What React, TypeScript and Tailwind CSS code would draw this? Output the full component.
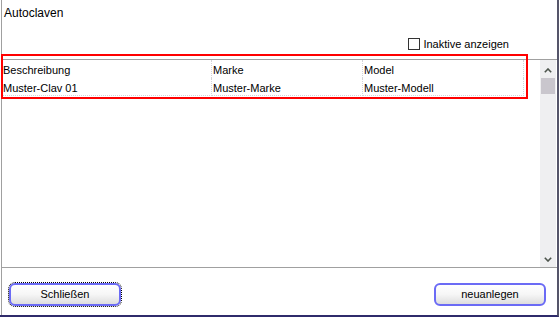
import React from "react";

function Chevron({ up }: { up?: boolean }) {
  return (
    <svg width="8" height="5" viewBox="0 0 8 5">
      <path
        d={up ? "M0.8 4.2 L4 1 L7.2 4.2" : "M0.8 0.8 L4 4 L7.2 0.8"}
        fill="none"
        stroke="#4d554d"
        strokeWidth="1.6"
      />
    </svg>
  );
}

export default function App() {
  const cell =
    "h-[18px] pt-[2px] pl-[1px] leading-[17px] box-border overflow-hidden whitespace-nowrap border-r border-dotted border-r-[#d4d4d8]";
  return (
    <div className="relative w-[559px] h-[317px] overflow-hidden bg-white pl-[1px] border-r-2 border-r-[#55556a] border-b-2 border-b-[#2f2b6b] font-['Liberation_Sans',Arial,sans-serif] text-[11px] text-black">
      <div className="flex h-full flex-col border-l border-l-[#a0a0a0]">
        <div className="pl-[2px] pt-[6px] text-[12px] leading-[15px]">Autoclaven</div>

        <div className="mt-[16px] flex h-[14px] items-center justify-end pr-[48px]">
          <div className="h-[12px] w-[12px] border border-[#333333] bg-white" />
          <span className="ml-[3px] leading-[14px]">Inaktive anzeigen</span>
        </div>

        <div className="mt-[8px] flex h-[209px] border-y border-[#a0a0a0]">
          <div className="flex-1">
            <div className="flex">
              <div className={`${cell} w-[210px]`}>Beschreibung</div>
              <div className={`${cell} w-[151px]`}>Marke</div>
              <div className={`${cell} w-[161px]`}>Model</div>
            </div>
            <div className="flex">
              <div className={`${cell} w-[210px] border-b border-b-[#d4d4d8]`}>Muster-Clav 01</div>
              <div className={`${cell} w-[151px] border-b border-b-[#d4d4d8]`}>Muster-Marke</div>
              <div className={`${cell} w-[161px] border-b border-b-[#d4d4d8]`}>Muster-Modell</div>
            </div>
          </div>
          <div className="mr-[1px] flex w-[16px] flex-col bg-[#efeff1]">
            <div className="flex h-[18px] items-center justify-center pt-[2px]">
              <Chevron up />
            </div>
            <div className="mx-[1px] h-[16px] bg-[#c9c6cd]" />
            <div className="flex-1" />
            <div className="flex h-[16px] items-center justify-center">
              <Chevron />
            </div>
          </div>
        </div>

        <div className="mt-[15px] flex justify-between">
          <button className="ml-[7px] h-[23px] w-[112px] rounded-[6px] border-2 border-[#6b6bf5] bg-gradient-to-b from-white via-[#f6f6f6] to-[#dedede] text-[11px] leading-[17px] text-black outline outline-1 outline-dotted outline-black">
            Schließen
          </button>
          <button className="mr-[11px] h-[23px] w-[112px] rounded-[6px] border-2 border-[#6b6bf5] bg-gradient-to-b from-white via-[#f6f6f6] to-[#dedede] text-[11px] leading-[17px] text-black">
            neuanlegen
          </button>
        </div>
      </div>

      <div className="absolute left-[1px] top-[54px] h-[45px] w-[527px] border-2 border-[#ff0000]" />
    </div>
  );
}
